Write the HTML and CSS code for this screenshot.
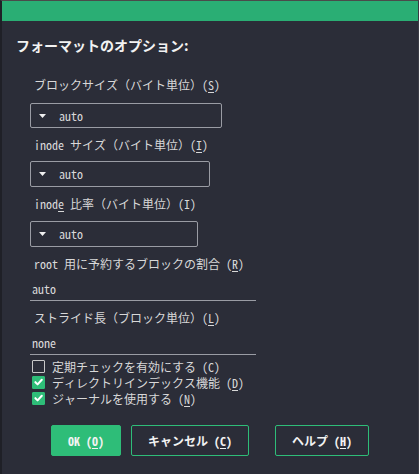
FILE: index.html
```html
<!DOCTYPE html>
<html lang="ja">
<head>
<meta charset="utf-8">
<link rel="stylesheet" href="styles.css">
</head>
<body>
<div class="frame">
  <div class="titlebar"></div>
  <div class="title">フォーマットのオプション:</div>
  <div class="form">
    <div class="label">ブロックサイズ（バイト単位）(<u>S</u>)</div>
    <div class="select w1"><svg class="arrow" viewBox="0 0 7 4" width="7" height="4"><path d="M0 0 H7 L3.5 4 Z" fill="#f0f0f0"/></svg><span class="val">auto</span></div>
    <div class="label">inode サイズ（バイト単位）(<u>I</u>)</div>
    <div class="select w2"><svg class="arrow" viewBox="0 0 7 4" width="7" height="4"><path d="M0 0 H7 L3.5 4 Z" fill="#f0f0f0"/></svg><span class="val">auto</span></div>
    <div class="label">inod<u>e</u> 比率（バイト単位）(I)</div>
    <div class="select w3"><svg class="arrow" viewBox="0 0 7 4" width="7" height="4"><path d="M0 0 H7 L3.5 4 Z" fill="#f0f0f0"/></svg><span class="val">auto</span></div>
    <div class="label">root 用に予約するブロックの割合 (<u>R</u>)</div>
    <div class="entry">auto</div>
    <div class="label">ストライド長（ブロック単位）(<u>L</u>)</div>
    <div class="entry">none</div>
    <div class="checks">
      <div class="check"><span class="box"></span><span>定期チェックを有効にする (C)</span></div>
      <div class="check"><span class="box on"><svg viewBox="0 0 12 12" width="12" height="12"><path d="M2.6 6.2 L5 8.6 L9.6 3.6" fill="none" stroke="#fff" stroke-width="2.2" stroke-linecap="round" stroke-linejoin="round"/></svg></span><span>ディレクトリインデックス機能 (<u>D</u>)</span></div>
      <div class="check"><span class="box on"><svg viewBox="0 0 12 12" width="12" height="12"><path d="M2.6 6.2 L5 8.6 L9.6 3.6" fill="none" stroke="#fff" stroke-width="2.2" stroke-linecap="round" stroke-linejoin="round"/></svg></span><span>ジャーナルを使用する (<u>N</u>)</span></div>
    </div>
  </div>
  <div class="buttons">
    <div class="btn ok">OK (<u>O</u>)</div>
    <div class="btn cancel">キャンセル (<u>C</u>)</div>
    <div class="btn help">ヘルプ (<u>H</u>)</div>
  </div>
</div>
</body>
</html>
```
FILE: styles.css
```css
html, body {
  margin: 0;
  padding: 0;
  background: #2b2d38;
}
body {
  font-family: "Noto Sans Mono CJK JP", "Noto Sans CJK JP", "DejaVu Sans Mono", monospace;
  color: #d8d8d8;
  font-size: 12px;
}
.frame {
  height: 473px;
  border-top: 1px solid #4a4a4a;
  border-left: 2px solid #1f2027;
  border-right: 1px solid #3a3b44;
  box-sizing: content-box;
  width: 416px;
}
.titlebar {
  height: 20px;
  background: #2aae74;
}
.title {
  margin-top: 14px;
  padding-left: 14px;
  font-size: 14px;
  font-weight: bold;
  line-height: 20px;
  color: #f2f2f2;
  font-family: "Noto Sans CJK JP", sans-serif;
}
.form {
  padding-left: 28px;
  display: flex;
  flex-direction: column;
  align-items: flex-start;
}
.label {
  line-height: 18px;
  margin-left: 4px;
  margin-top: 8px;
}
.form .label:first-child { margin-top: 21px; }
u { text-decoration-thickness: 1px; text-underline-offset: 2px; }
.select {
  box-sizing: border-box;
  height: 25px;
  margin-top: 9px;
  border: 1px solid #9a9ca4;
  border-radius: 2px;
  display: flex;
  align-items: center;
  padding-left: 8px;
}
.select.w2, .select.w3 { height: 26px; margin-top: 7px; }
.select.w3 { margin-top: 8px; }
.w1 { width: 192px; }
.w2 { width: 180px; }
.w3 { width: 168px; }
.arrow {
  display: block;
  flex: none;
  margin-right: 13px;
}
.val { line-height: 16px; }
.entry {
  box-sizing: border-box;
  width: 226px;
  line-height: 18px;
  padding: 4px 2px 2px 2px;
  border-bottom: 1px solid #9a9ca4;
  margin-top: 3px;
}
.checks {
  margin-top: 3px;
  display: flex;
  flex-direction: column;
}
.check {
  display: flex;
  align-items: center;
  height: 16px;
  margin-left: 2px;
}
.box {
  box-sizing: border-box;
  width: 13px;
  height: 13px;
  border: 1px solid #c8c8c8;
  border-radius: 1px;
  margin-right: 7px;
  display: flex;
  align-items: center;
  justify-content: center;
}
.box.on {
  background: #2ebd78;
  border-color: #2ebd78;
}
.buttons {
  display: flex;
  margin-top: 19px;
  padding-left: 49px;
}
.btn {
  box-sizing: border-box;
  height: 31px;
  display: flex;
  align-items: center;
  justify-content: center;
  border: 1px solid #2ebd78;
  border-radius: 2px;
  font-weight: bold;
  color: #f2f2f2;
}
.ok { width: 70px; background: #2ebd78; }
.cancel { width: 118px; margin-left: 10px; }
.help { width: 94px; margin-left: 26px; }
```
